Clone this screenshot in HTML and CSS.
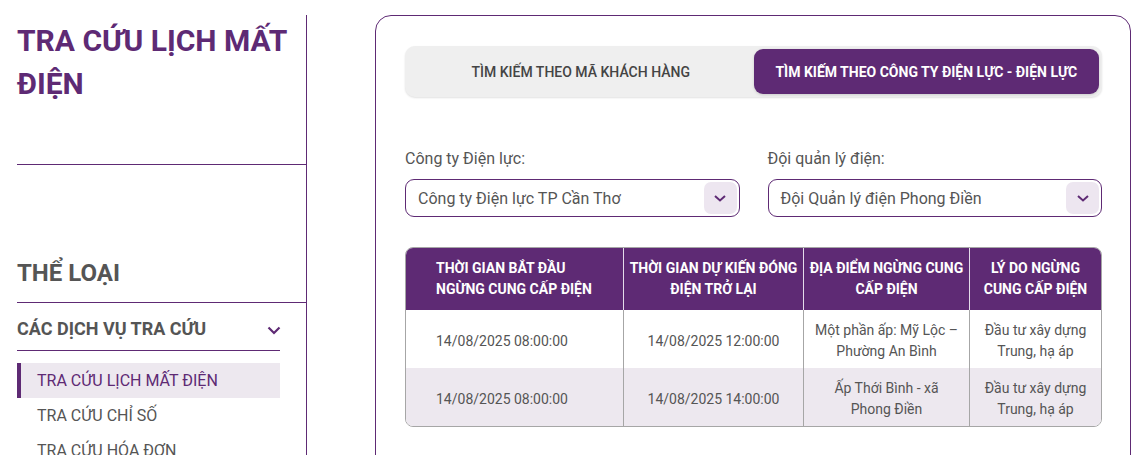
FILE: index.html
```html
<!DOCTYPE html>
<html lang="vi">
<head>
<meta charset="utf-8">
<title>Tra cứu lịch mất điện</title>
<link rel="stylesheet" href="styles.css">
</head>
<body>
<div class="page">
  <aside class="sidebar">
    <h1 class="page-title">TRA CỨU LỊCH MẤT ĐIỆN</h1>
    <h2 class="cat-title">THỂ LOẠI</h2>
    <div class="group-head">
      <span>CÁC DỊCH VỤ TRA CỨU</span>
      <svg class="group-chev" width="14" height="9" viewBox="0 0 14 9"><path d="M1.5 1.5 L7 7 L12.5 1.5" fill="none" stroke="#5e2a74" stroke-width="2.2"/></svg>
    </div>
    <ul class="menu">
      <li class="menu-item active">TRA CỨU LỊCH MẤT ĐIỆN</li>
      <li class="menu-item">TRA CỨU CHỈ SỐ</li>
      <li class="menu-item">TRA CỨU HÓA ĐƠN</li>
    </ul>
  </aside>
  <main class="card">
    <div class="tabs">
      <div class="tab">TÌM KIẾM THEO MÃ KHÁCH HÀNG</div>
      <div class="tab tab-active">TÌM KIẾM THEO CÔNG TY ĐIỆN LỰC - ĐIỆN LỰC</div>
    </div>
    <div class="filters">
      <div class="field">
        <div class="field-label">Công ty Điện lực:</div>
        <div class="select">
          <span>Công ty Điện lực TP Cần Thơ</span>
          <span class="select-btn"><svg width="14" height="9" viewBox="0 0 14 9"><path d="M2 2 L7 6.5 L12 2" fill="none" stroke="#5e2a74" stroke-width="2"/></svg></span>
        </div>
      </div>
      <div class="field">
        <div class="field-label">Đội quản lý điện:</div>
        <div class="select">
          <span>Đội Quản lý điện Phong Điền</span>
          <span class="select-btn"><svg width="14" height="9" viewBox="0 0 14 9"><path d="M2 2 L7 6.5 L12 2" fill="none" stroke="#5e2a74" stroke-width="2"/></svg></span>
        </div>
      </div>
    </div>
    <div class="grid-table">
      <div class="th first">THỜI GIAN BẮT ĐẦU<br>NGỪNG CUNG CẤP ĐIỆN</div>
      <div class="th">THỜI GIAN DỰ KIẾN ĐÓNG<br>ĐIỆN TRỞ LẠI</div>
      <div class="th">ĐỊA ĐIỂM NGỪNG CUNG<br>CẤP ĐIỆN</div>
      <div class="th">LÝ DO NGỪNG<br>CUNG CẤP ĐIỆN</div>

      <div class="td first">14/08/2025 08:00:00</div>
      <div class="td">14/08/2025 12:00:00</div>
      <div class="td"><span>Một phần ấp: Mỹ Lộc –<br>Phường An Bình</span></div>
      <div class="td"><span>Đầu tư xây dựng<br>Trung, hạ áp</span></div>

      <div class="td first alt">14/08/2025 08:00:00</div>
      <div class="td alt">14/08/2025 14:00:00</div>
      <div class="td alt"><span>Ấp Thới Bình - xã<br>Phong Điền</span></div>
      <div class="td alt"><span>Đầu tư xây dựng<br>Trung, hạ áp</span></div>
    </div>
  </main>
</div>
</body>
</html>
```

FILE: styles.css
```css
* { box-sizing: border-box; }
html, body {
  margin: 0;
  height: 455px;
  overflow: hidden;
  background: #fff;
  font-family: Roboto, "Noto Sans", sans-serif;
  color: #555;
}
.page {
  display: flex;
  height: 455px;
  padding-top: 15px;
}
.sidebar {
  width: 307px;
  flex: none;
  padding-left: 17px;
  border-right: 1px solid #5e2a74;
}
.page-title {
  margin: 4px 0 0;
  padding-bottom: 59px;
  border-bottom: 1px solid #5e2a74;
  font-size: 30px;
  line-height: 43px;
  font-weight: 700;
  color: #5e2a74;
}
.cat-title {
  margin: 93px 0 0;
  padding-bottom: 13px;
  border-bottom: 1px solid #5e2a74;
  font-size: 24px;
  line-height: 31px;
  font-weight: 700;
  color: #555;
}
.group-head {
  width: 263px;
  margin-top: 15px;
  padding-bottom: 10px;
  border-bottom: 1px solid #5e2a74;
  display: flex;
  align-items: center;
  justify-content: space-between;
  font-size: 18px;
  line-height: 22px;
  font-weight: 700;
  color: #555;
}
.group-chev { margin-right: -1px; margin-top: 2px; }
.menu {
  list-style: none;
  margin: 12px 0 0;
  padding: 0;
  width: 263px;
}
.menu-item {
  height: 35px;
  line-height: 35px;
  font-size: 16px;
  padding-left: 16px;
  border-left: 4px solid transparent;
  color: #555;
}
.menu-item.active {
  background: #ede8ef;
  border-left-color: #5e2a74;
  color: #5e2a74;
}
.card {
  flex: 1;
  margin-left: 68px;
  border: 1px solid #5e2a74;
  border-radius: 16px 16px 0 0;
  padding: 30px 28px 0 29px;
  height: 460px;
}
.tabs {
  width: 697px;
  display: flex;
  padding: 3px;
  background: #efefef;
  border-radius: 10px;
  box-shadow: 0 1px 2px rgba(0,0,0,0.12);
}
.tab {
  flex: 1;
  height: 45px;
  display: flex;
  align-items: center;
  justify-content: center;
  font-size: 14px;
  font-weight: 500;
  color: #444;
  border-radius: 9px;
}
.tab-active {
  background: #5e2a74;
  color: #fff;
  font-weight: 700;
  box-shadow: 0 1px 3px rgba(0,0,0,0.15);
}
.filters {
  width: 697px;
  margin-top: 52px;
  display: flex;
  gap: 28px;
}
.field { flex: 1; }
.field-label {
  font-size: 16px;
  line-height: 19px;
  margin-bottom: 11px;
  color: #555;
}
.select {
  height: 38px;
  border: 1px solid #5e2a74;
  border-radius: 9px;
  display: flex;
  align-items: center;
  justify-content: space-between;
  padding: 0 2px 0 12px;
  font-size: 16px;
  color: #555;
}
.select-btn {
  width: 33px;
  height: 32px;
  border-radius: 7px;
  background: #ede6f0;
  display: flex;
  align-items: center;
  justify-content: center;
}
.grid-table {
  width: 697px;
  margin-top: 30px;
  border: 1px solid #a6a6a6;
  border-radius: 8px;
  overflow: hidden;
  display: grid;
  grid-template-columns: 217px 180px 166px 1fr;
}
.th {
  background: #5e2a74;
  color: #fff;
  font-size: 14px;
  font-weight: 700;
  line-height: 21px;
  padding: 10px 4px;
  text-align: center;
  border-left: 1px solid #e4dcea;
}
.td {
  font-size: 14px;
  line-height: 21px;
  padding: 10px 4px 6px;
  text-align: center;
  color: #555;
  min-height: 58px;
  display: flex;
  align-items: center;
  justify-content: center;
  border-left: 1px solid #a6a6a6;
}
.th.first, .td.first {
  border-left: none;
  text-align: left;
  justify-content: flex-start;
  padding-left: 30px;
}
.td.alt { background: #ede8ef; }
```
